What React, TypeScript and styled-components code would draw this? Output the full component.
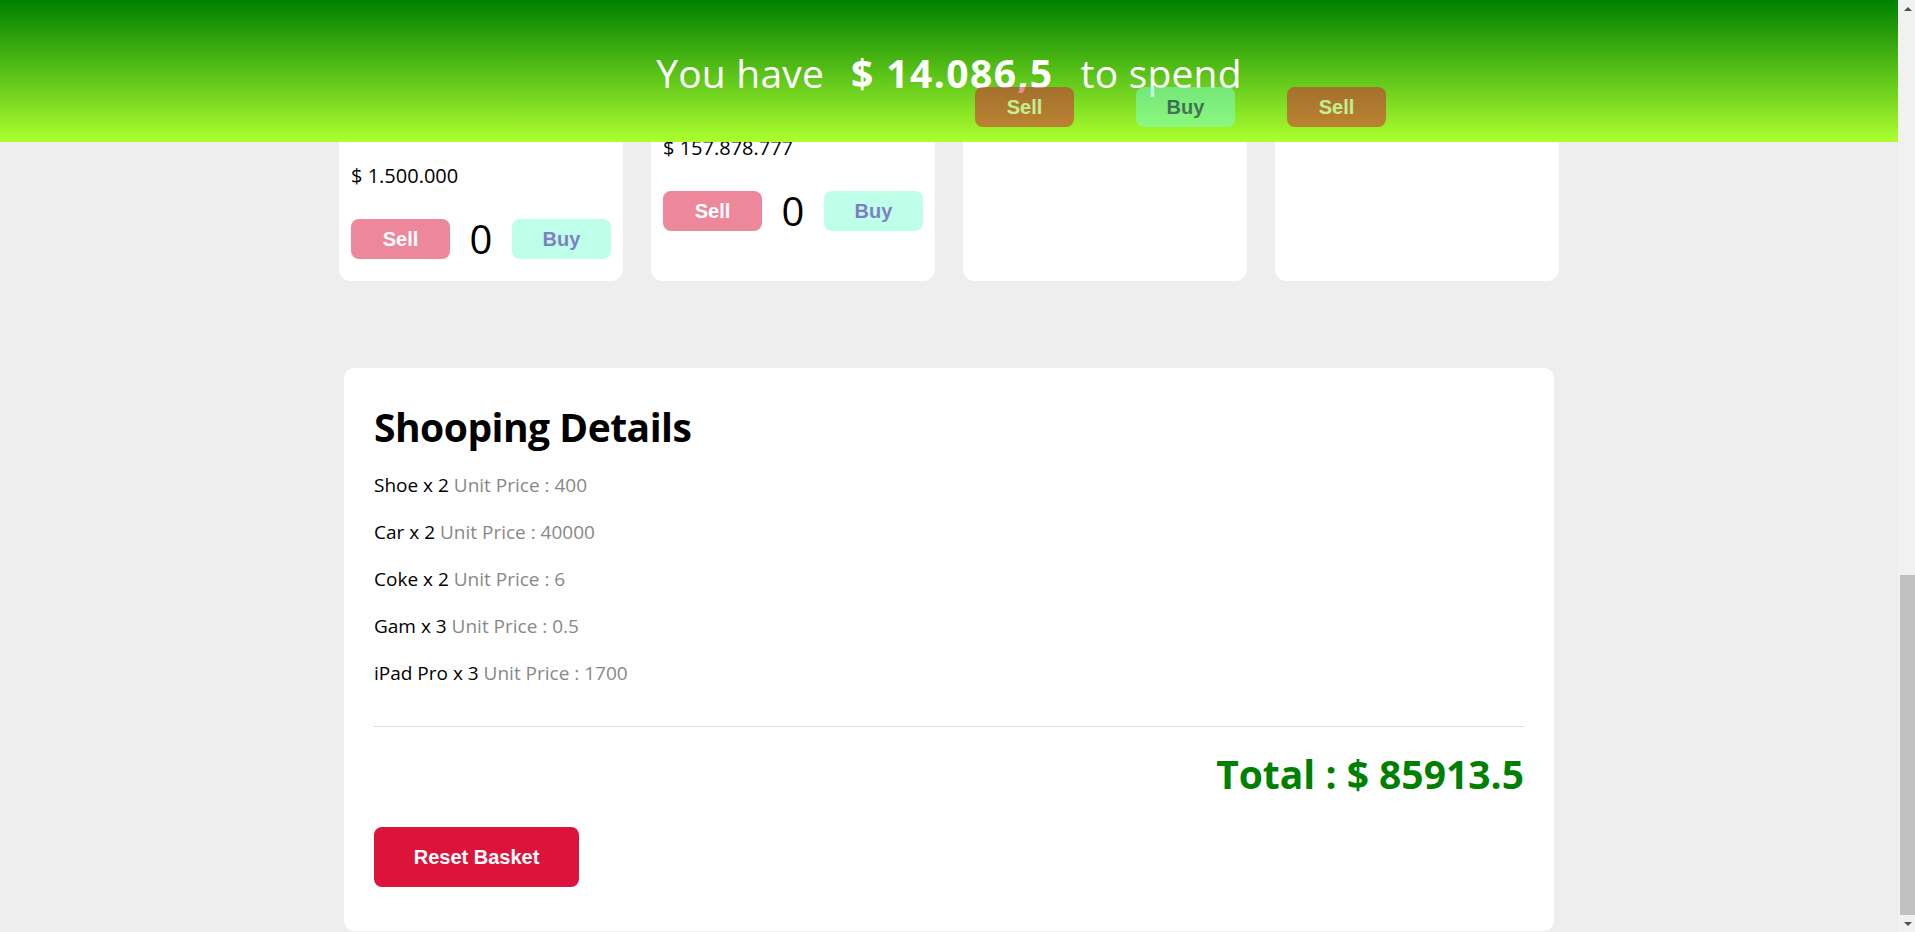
import React, { useLayoutEffect, useEffect, useState } from "react";
import styled, { createGlobalStyle } from "styled-components";

const GlobalStyle = createGlobalStyle`
  html {
    background: #eeeeee;
    scrollbar-width: none;
  }
  html::-webkit-scrollbar { display: none; }
  body {
    margin: 0;
    padding-right: 17px;
    background: #eeeeee;
    color: #000;
    font-family: "Open Sans", "Noto Sans", sans-serif;
  }
  * { box-sizing: border-box; }
`;

type Product = {
  id: number;
  name: string;
  price: string;
  img: number;
  tone: string;
  canBuy?: boolean;
};

const products: Product[] = [
  { id: 1, name: "Big Mac", price: "$ 2", img: 388, tone: "#f6e7c8" },
  { id: 2, name: "Flip Flops", price: "$ 3", img: 388, tone: "#d8eefc" },
  { id: 3, name: "Coca-Cola Pack", price: "$ 5", img: 388, tone: "#fbd9d9" },
  { id: 4, name: "Movie Ticket", price: "$ 12", img: 388, tone: "#e6e1fb" },
  { id: 5, name: "Book", price: "$ 15", img: 388, tone: "#e2f5dd" },
  { id: 6, name: "Video Game", price: "$ 60", img: 388, tone: "#fdf0d5" },
  { id: 7, name: "Designer Handbag", price: "$ 5.500", img: 388, tone: "#f3dff0" },
  { id: 8, name: "Gold Bar", price: "$ 700.000", img: 388, tone: "#faf0c4" },
  { id: 9, name: "Mansion", price: "$ 1.500.000", img: 228, tone: "#e4ecf3" },
  { id: 10, name: "Mega Yacht", price: "$ 157.878.777", img: 200, tone: "#d6ecf6" },
  { id: 11, name: "Cruise Ship", price: "$ 930.000.000", img: 96, tone: "#dfe9f1" },
  { id: 12, name: "Skyscraper", price: "$ 850.000.000", img: 96, tone: "#ececec", canBuy: false },
];

const basket = [
  { name: "Shoe", qty: 2, unit: "400" },
  { name: "Car", qty: 2, unit: "40000" },
  { name: "Coke", qty: 2, unit: "6" },
  { name: "Gam", qty: 3, unit: "0.5" },
  { name: "iPad Pro", qty: 3, unit: "1700" },
];

const Header = styled.header`
  position: fixed;
  top: 0;
  left: 0;
  right: 17px;
  height: 142px;
  padding-top: 3px;
  display: flex;
  align-items: center;
  justify-content: center;
  gap: 27px;
  background: linear-gradient(to bottom, #008000, #adff2f);
  color: #ffffff;
  font-size: 39px;
  line-height: 52px;
`;

const Phrase = styled.span`
  letter-spacing: 0.2px;
`;

const Amount = styled.strong`
  font-weight: 700;
  letter-spacing: 1.4px;
`;

const Main = styled.main`
  padding: 170px 0 1px;
`;

const ProductGrid = styled.section`
  width: 1220px;
  margin: 0 auto;
  display: grid;
  grid-template-columns: repeat(4, 284px);
  column-gap: 28px;
  row-gap: 28px;
`;

const Card = styled.article`
  background: #ffffff;
  border-radius: 12px;
  padding: 12px 12px 22px;
  display: flex;
  flex-direction: column;
`;

const Picture = styled.div<{ $h: number; $tone: string }>`
  height: ${(p) => p.$h}px;
  border-radius: 8px;
  background: ${(p) => p.$tone};
  display: flex;
  align-items: center;
  justify-content: center;
`;

const Name = styled.h3`
  margin: 12px 0 22px;
  font-size: 22px;
  line-height: 28px;
  font-weight: 600;
`;

const Price = styled.p`
  margin: 0 0 30px;
  font-size: 20px;
  line-height: 27px;
`;

const Controls = styled.div`
  display: flex;
  align-items: center;
  justify-content: space-between;
`;

const TradeButton = styled.button<{ $kind: "sell" | "buy" }>`
  width: 99px;
  height: 40px;
  border: none;
  border-radius: 8px;
  opacity: 0.5;
  font-family: "Liberation Sans", Arial, sans-serif;
  font-size: 20px;
  font-weight: 700;
  cursor: not-allowed;
  background: ${(p) => (p.$kind === "sell" ? "#dc143c" : "#7fffd4")};
  color: ${(p) => (p.$kind === "sell" ? "#ffffff" : "#00008b")};
`;

const Count = styled.span`
  font-size: 40px;
  line-height: 40px;
  font-weight: 400;
`;

const Details = styled.section`
  width: 1210px;
  margin: 87px auto 0;
  background: #ffffff;
  border-radius: 10px;
  padding: 35px 30px 44px;
`;

const Title = styled.h1`
  margin: 0;
  font-size: 39px;
  line-height: 48px;
  font-weight: 700;
  letter-spacing: -0.5px;
`;

const ItemList = styled.ul`
  list-style: none;
  margin: 21px 0 0;
  padding: 0;
  display: flex;
  flex-direction: column;
  gap: 20px;
`;

const Item = styled.li`
  font-size: 19px;
  line-height: 27px;
`;

const Muted = styled.span`
  color: #888888;
`;

const Divider = styled.hr`
  margin: 39px 0 0;
  border: none;
  border-top: 1px solid #dddddd;
`;

const Total = styled.h2`
  margin: 23px 0 0;
  text-align: right;
  color: #008000;
  font-size: 39px;
  line-height: 48px;
  font-weight: 700;
`;

const ResetButton = styled.button`
  margin-top: 29px;
  width: 205px;
  height: 60px;
  border: none;
  border-radius: 8px;
  background: #dc143c;
  color: #ffffff;
  font-family: "Liberation Sans", Arial, sans-serif;
  font-size: 20px;
  font-weight: 700;
  cursor: pointer;
`;

/* Drawn window scrollbar (classic style) */
const ScrollRail = styled.div`
  position: fixed;
  top: 0;
  right: 0;
  bottom: 0;
  width: 17px;
  background: #f1f1f1;
  display: flex;
  flex-direction: column;
  z-index: 20;
`;

const RailButton = styled.div<{ $dir: "up" | "down" }>`
  flex: none;
  height: 17px;
  padding-left: 2px;
  display: flex;
  align-items: center;
  justify-content: center;
  &::before {
    content: "";
    width: 0;
    height: 0;
    border-left: 4px solid transparent;
    border-right: 4px solid transparent;
    ${(p) =>
      p.$dir === "up"
        ? "border-bottom: 4px solid #505050;"
        : "border-top: 4px solid #505050;"}
  }
`;

const RailTrack = styled.div`
  flex: 1;
  position: relative;
`;

const RailThumb = styled.div`
  position: absolute;
  left: 2px;
  right: 0;
  background: #c1c1c1;
`;

function ProductArt() {
  return (
    <svg width="56" height="56" viewBox="0 0 24 24" fill="none" stroke="#9aa4ad" strokeWidth="1.5">
      <rect x="3" y="4" width="18" height="16" rx="2" />
      <circle cx="9" cy="10" r="2" />
      <path d="M21 16l-5-5-9 9" />
    </svg>
  );
}

export default function App() {
  const [thumb, setThumb] = useState({ top: 0, height: 0 });

  const sync = () => {
    const doc = document.documentElement;
    window.scrollTo(0, doc.scrollHeight);
    const track = window.innerHeight - 34;
    const total = doc.scrollHeight || 1;
    setThumb({
      top: (track * window.scrollY) / total,
      height: (track * window.innerHeight) / total,
    });
  };

  useLayoutEffect(() => {
    sync();
  }, []);
  useEffect(() => {
    const t = setTimeout(sync, 50);
    return () => clearTimeout(t);
  }, []);

  return (
    <>
      <GlobalStyle />
      <Header>
        <Phrase>You have</Phrase>
        <Amount>$ 14.086,5</Amount>
        <Phrase>to spend</Phrase>
      </Header>
      <Main>
        <ProductGrid>
          {products.map((p) => (
            <Card key={p.id}>
              <Picture $h={p.img} $tone={p.tone}>
                <ProductArt />
              </Picture>
              <Name>{p.name}</Name>
              <Price>{p.price}</Price>
              <Controls>
                <TradeButton $kind="sell" disabled>
                  Sell
                </TradeButton>
                <Count>0</Count>
                {p.canBuy !== false && (
                  <TradeButton $kind="buy" disabled>
                    Buy
                  </TradeButton>
                )}
              </Controls>
            </Card>
          ))}
        </ProductGrid>
        <Details>
          <Title>Shooping Details</Title>
          <ItemList>
            {basket.map((b) => (
              <Item key={b.name}>
                {b.name} x {b.qty} <Muted>Unit Price : {b.unit}</Muted>
              </Item>
            ))}
          </ItemList>
          <Divider />
          <Total>Total : $ 85913.5</Total>
          <ResetButton>Reset Basket</ResetButton>
        </Details>
      </Main>
      <ScrollRail aria-hidden="true">
        <RailButton $dir="up" />
        <RailTrack>
          <RailThumb style={{ top: thumb.top, height: thumb.height }} />
        </RailTrack>
        <RailButton $dir="down" />
      </ScrollRail>
    </>
  );
}
